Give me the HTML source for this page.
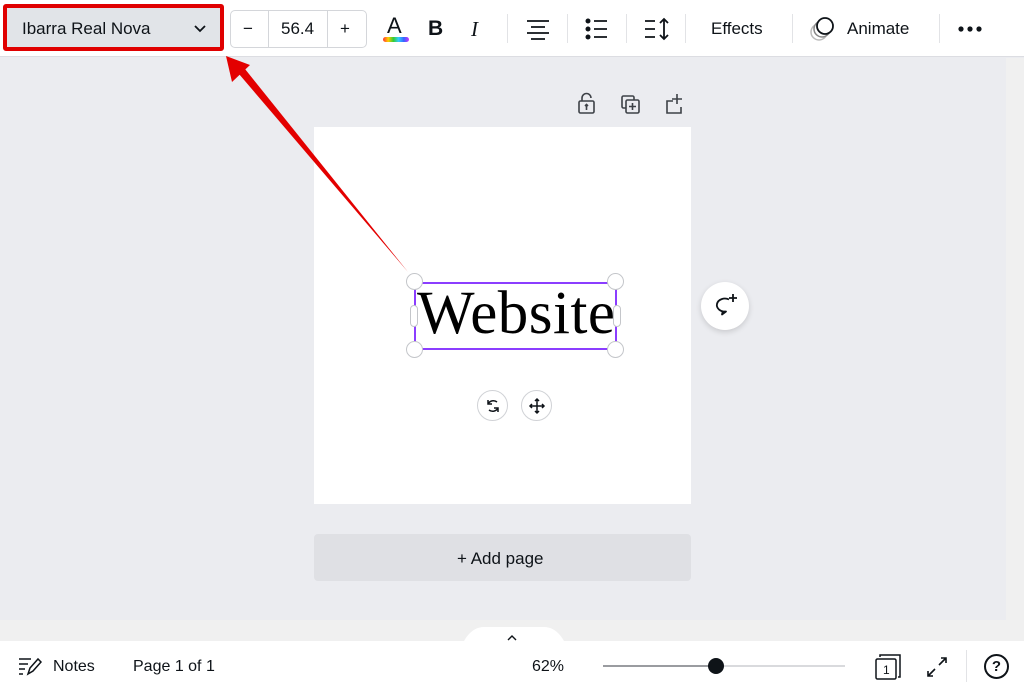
<!DOCTYPE html>
<html><head><meta charset="utf-8"><style>
*{margin:0;padding:0;box-sizing:border-box}
body{width:1024px;height:688px;overflow:hidden;background:#ebecf0;font-family:"Liberation Sans",sans-serif;position:relative;color:#0e1318}
.top{position:absolute;left:0;top:0;width:1024px;height:57px;background:#fff;border-bottom:1px solid #dcdde2}
.abs{position:absolute}
.sep{position:absolute;top:14px;width:1px;height:29px;background:#e2e3e6}
.t{position:absolute;font-size:17px;color:#0e1318}
</style></head><body>
<div class="top">
  <div class="abs" style="left:3px;top:4px;width:221px;height:47px;border:4px solid #e00000;border-radius:3px;background:#e1e4e8"></div>
  <div class="t" style="left:22px;top:19px">Ibarra Real Nova</div>
  <svg class="abs" style="left:193px;top:24px" width="14" height="10"><path d="M2 2l5 5 5-5" stroke="#0e1318" stroke-width="1.8" fill="none"/></svg>
  <div class="abs" style="left:230px;top:10px;width:137px;height:38px;border:1px solid #d4d6da;border-radius:5px"></div>
  <div class="abs" style="left:268px;top:11px;width:1px;height:36px;background:#d4d6da"></div>
  <div class="abs" style="left:327px;top:11px;width:1px;height:36px;background:#d4d6da"></div>
  <div class="t" style="left:243px;top:19px">−</div>
  <div class="t" style="left:281px;top:19px">56.4</div>
  <div class="t" style="left:340px;top:19px">+</div>
  <div class="t" style="left:387px;top:13px;font-size:22px">A</div>
  <div class="abs" style="left:383px;top:37px;width:26px;height:5px;border-radius:3px;background:linear-gradient(90deg,#f33,#fc0,#3c3,#3cf,#36f,#c3f)"></div>
  <div class="t" style="left:428px;top:17px;font-size:21px;font-weight:bold">B</div>
  <div class="t" style="left:471px;top:17px;font-size:21px;font-style:italic;font-family:'Liberation Serif',serif">I</div>
  <div class="sep" style="left:507px"></div>
  <svg class="abs" style="left:526px;top:18px" width="24" height="22"><path d="M1 3h22M5 9h14M1 15h22M5 21h14" stroke="#0e1318" stroke-width="1.8"/></svg>
  <div class="sep" style="left:567px"></div>
  <svg class="abs" style="left:585px;top:17px" width="24" height="24"><circle cx="3" cy="4" r="2.5" fill="#0e1318"/><circle cx="3" cy="12" r="2.5" fill="#0e1318"/><circle cx="3" cy="20" r="2.5" fill="#0e1318"/><path d="M9 4h13M9 12h13M9 20h13" stroke="#0e1318" stroke-width="1.8"/></svg>
  <div class="sep" style="left:626px"></div>
  <svg class="abs" style="left:644px;top:17px" width="26" height="24"><path d="M1 4h10M1 12h10M1 20h10M20 2v20M16 6l4-4 4 4M16 18l4 4 4-4" stroke="#0e1318" stroke-width="1.8" fill="none"/></svg>
  <div class="sep" style="left:685px"></div>
  <div class="t" style="left:711px;top:19px">Effects</div>
  <div class="sep" style="left:792px"></div>
  <svg class="abs" style="left:809px;top:14px" width="30" height="30"><circle cx="10" cy="18" r="8" fill="none" stroke="#bbb" stroke-width="1.5"/><circle cx="13" cy="15" r="8" fill="#fff" stroke="#888" stroke-width="1.5"/><circle cx="16" cy="12" r="8" fill="#fff" stroke="#0e1318" stroke-width="1.8"/></svg>
  <div class="t" style="left:847px;top:19px">Animate</div>
  <div class="sep" style="left:939px"></div>
  <svg class="abs" style="left:957px;top:25px" width="26" height="8"><circle cx="4" cy="4" r="2.6" fill="#0e1318"/><circle cx="13" cy="4" r="2.6" fill="#0e1318"/><circle cx="22" cy="4" r="2.6" fill="#0e1318"/></svg>
</div>
<div class="abs" style="left:1006px;top:58px;width:18px;height:562px;background:#f0f0f0"></div>
<div class="abs" style="left:0;top:620px;width:1024px;height:21px;background:#f0f0f0"></div>
<svg class="abs" style="left:577px;top:92px" width="110" height="24"><g stroke="#3d4147" stroke-width="1.6" fill="none"><rect x="2" y="9" width="15" height="12" rx="1.5"/><path d="M5 9V6a4.5 4.5 0 0 1 9 0M9.5 18v-5M8 14l1.5-1.5 1.5 1.5"/><rect x="45" y="4" width="12" height="12" rx="1.5"/><rect x="49" y="8" width="13" height="13" rx="1.5" fill="#ebecf0"/><path d="M55.5 11v7M52 14.5h7"/><path d="M96 9h-6v12h14v-6M100 2v10M95 7h10"/></g></svg>
<div class="abs" style="left:314px;top:127px;width:377px;height:377px;background:#fff"></div>
<div class="abs" style="left:414px;top:282px;width:203px;height:68px;border:2px solid #8b3dff"></div>
<div class="abs" style="left:417px;top:283px;font-family:'Liberation Serif',serif;font-size:61px;line-height:1;letter-spacing:0.5px;color:#000">Website</div>
<div class="abs" style="left:406px;top:273px;width:17px;height:17px;border-radius:50%;background:#fff;border:1px solid #c4c6ca"></div>
<div class="abs" style="left:607px;top:273px;width:17px;height:17px;border-radius:50%;background:#fff;border:1px solid #c4c6ca"></div>
<div class="abs" style="left:406px;top:341px;width:17px;height:17px;border-radius:50%;background:#fff;border:1px solid #c4c6ca"></div>
<div class="abs" style="left:607px;top:341px;width:17px;height:17px;border-radius:50%;background:#fff;border:1px solid #c4c6ca"></div>
<div class="abs" style="left:410px;top:305px;width:8px;height:22px;border-radius:4px;background:#fff;border:1px solid #c4c6ca"></div>
<div class="abs" style="left:613px;top:305px;width:8px;height:22px;border-radius:4px;background:#fff;border:1px solid #c4c6ca"></div>
<div class="abs" style="left:477px;top:390px;width:31px;height:31px;border-radius:50%;background:#fff;border:1px solid #d0d2d6"></div>
<div class="abs" style="left:521px;top:390px;width:31px;height:31px;border-radius:50%;background:#fff;border:1px solid #d0d2d6"></div>
<svg class="abs" style="left:484px;top:397px" width="18" height="18"><path d="M13 5a6 6 0 0 0-9 2M5 13a6 6 0 0 0 9-2M4 3v4h4M14 15v-4h-4" stroke="#0e1318" stroke-width="1.5" fill="none"/></svg>
<svg class="abs" style="left:528px;top:397px" width="18" height="18"><path d="M9 2v14M2 9h14M7 4l2-2 2 2M7 14l2 2 2-2M4 7L2 9l2 2M14 7l2 2-2 2" stroke="#0e1318" stroke-width="1.5" fill="none"/></svg>
<div class="abs" style="left:701px;top:282px;width:48px;height:48px;border-radius:50%;background:#fff;box-shadow:0 2px 6px rgba(0,0,0,.15)"></div>
<svg class="abs" style="left:712px;top:292px" width="28" height="28"><path d="M17 7.5A8 6.5 0 1 0 14 19.5L10 22.5 11 18.5" stroke="#0e1318" stroke-width="1.8" fill="none" stroke-linejoin="round"/><path d="M21 2v8M17 6h8" stroke="#0e1318" stroke-width="1.8"/></svg>
<div class="abs" style="left:314px;top:534px;width:377px;height:47px;border-radius:4px;background:#dfe0e4"></div>
<div class="t" style="left:457px;top:549px">+ Add page</div>
<svg class="abs" style="left:0;top:0" width="1024" height="688"><path d="M408 272L239 74 245 69Z" fill="#e30000"/><path d="M226 56L232 82 250 65Z" fill="#e30000"/><path d="M464 641q8-14 20-14h60q12 0 20 14" fill="#fff"/><path d="M508 640l4-4 4 4" stroke="#0e1318" stroke-width="1.4" fill="none"/></svg>
<div class="abs" style="left:0;top:641px;width:1024px;height:47px;background:#fff"></div>
<svg class="abs" style="left:18px;top:656px" width="24" height="20"><path d="M1 3h12M1 8h9M1 13h6M1 18h4M10 18l2-6 8-9 3 3-8 9z" stroke="#0e1318" stroke-width="1.5" fill="none"/></svg>
<div class="t" style="left:53px;top:658px;font-size:16px">Notes</div>
<div class="t" style="left:133px;top:658px;font-size:16px">Page 1 of 1</div>
<div class="t" style="left:532px;top:658px;font-size:16px">62%</div>
<div class="abs" style="left:603px;top:665px;width:242px;height:2px;background:#d9dadd"></div>
<div class="abs" style="left:603px;top:665px;width:112px;height:2px;background:#9a9ca0"></div>
<div class="abs" style="left:708px;top:658px;width:16px;height:16px;border-radius:50%;background:#0e1318"></div>
<svg class="abs" style="left:874px;top:653px" width="30" height="28"><path d="M6 4V2h20v22h-2" stroke="#0e1318" stroke-width="1.5" fill="none"/><rect x="2" y="6" width="20" height="20" rx="1.5" stroke="#0e1318" stroke-width="1.5" fill="#fff"/><text x="9" y="21" font-size="12" font-family="Liberation Sans" fill="#0e1318">1</text></svg>
<svg class="abs" style="left:926px;top:656px" width="22" height="22"><path d="M13 9l7-7M15 2h5v5M9 13l-7 7M2 15v5h5" stroke="#0e1318" stroke-width="1.6" fill="none"/></svg>
<div class="abs" style="left:966px;top:650px;width:1px;height:32px;background:#e2e3e6"></div>
<div class="abs" style="left:984px;top:654px;width:25px;height:25px;border-radius:50%;border:2px solid #0e1318;text-align:center;font-size:15px;line-height:21px;font-weight:bold">?</div>
</body></html>
